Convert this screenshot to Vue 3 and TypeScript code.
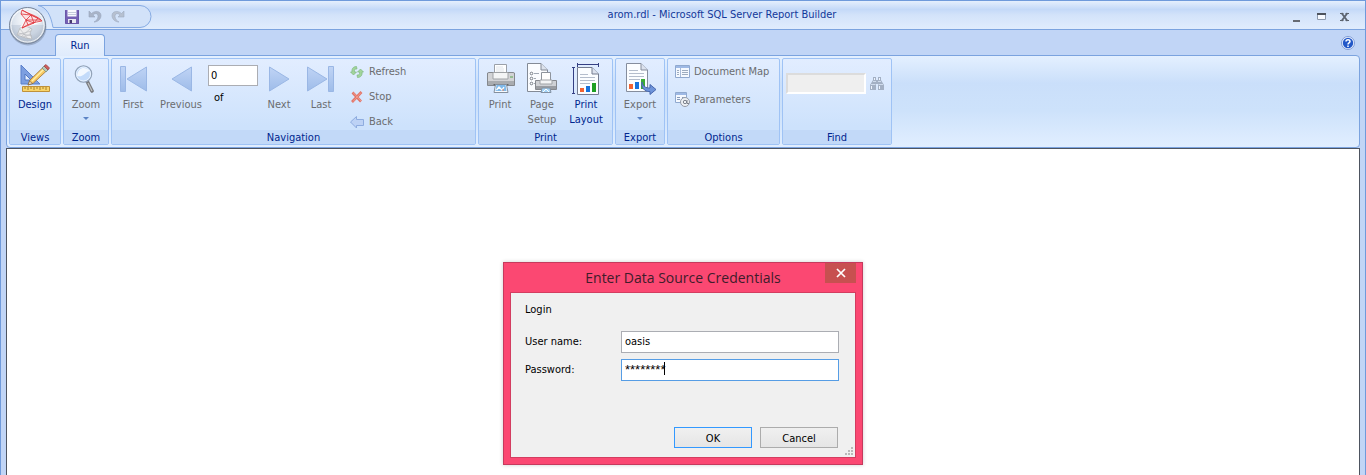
<script setup lang="ts">
import { ref } from 'vue'

const pageNumber = ref('0')
const findText = ref('')
const userName = ref('oasis')
const password = ref('********')
</script>

<template>
  <div class="window">
    <header class="titlebar">
      <div class="quick">
        <svg class="quick-frame" width="158" height="28" viewBox="0 0 158 28" aria-hidden="true">
          <path d="M37 4.500H139a11 11 0 0 1 0 22H52C50 15 46 6 37 4.500Z" fill="#d2e2f9" stroke="#86abe3" />
        </svg>
        <button class="plain" aria-label="Save">
          <svg width="14" height="14" viewBox="0 0 14 14"><path d="M0 0H14V14H1L0 13Z" fill="#7560b5" /><path d="M2.500 0H11.500V6.500H2.500Z" fill="#fafaff" /><path d="M3 2.500H11M3 4.500H11" stroke="#c6cbdc" /><path d="M3 9H11V14H3Z" fill="#e7e8f1" /><path d="M4.500 10H7V14H4.500Z" fill="#46386e" /><path d="M.500 .500V13.500H13.500V.500" fill="none" stroke="#6a56a8" /></svg>
        </button>
        <button class="plain" aria-label="Undo">
          <svg width="14" height="14" viewBox="0 0 14 14"><path d="M1 1V7H7L5 5C7 3 10 3 10 6.500C10 9 8 11 6 12C10 12 13 9 13 5.500C13 1 7 0 3.500 3.500Z" fill="#a9b4c7" stroke="#98a6be" stroke-width=".6" /></svg>
        </button>
        <button class="plain" aria-label="Redo">
          <svg width="14" height="14" viewBox="0 0 14 14"><path d="M13 1V7H7L9 5C7 3 4 3 4 6.500C4 9 6 11 8 12C4 12 1 9 1 5.500C1 1 7 0 10.500 3.500Z" fill="#b6c0d0" stroke="#9dabc1" stroke-width=".6" /></svg>
        </button>
      </div>
      <h1>arom.rdl - Microsoft SQL Server Report Builder</h1>
      <div class="controls">
        <button class="plain" aria-label="Minimize"><svg width="10" height="10" viewBox="0 0 10 10"><path d="M1 8H8V10H1Z" fill="#666b73" /></svg></button>
        <button class="plain" aria-label="Maximize"><svg width="10" height="10" viewBox="0 0 10 10"><path d="M1 1H10V8H1Z" fill="#f7faff" /><path d="M1.500 1V7.500H9.500V1" fill="none" stroke="#8b98ac" /><path d="M1 1H10V3H1Z" fill="#4d535d" /></svg></button>
        <button class="plain" aria-label="Close"><svg width="10" height="10" viewBox="0 0 10 10"><path d="M0 1.500H3.500M5.500 1.500H9M0 8.500H3.500M5.500 8.500H9" stroke="#58606c" /><path d="M1.500 1L7.500 9M7.500 1L1.500 9" stroke="#5c6470" stroke-width="1.800" /></svg></button>
      </div>
    </header>

    <button class="orb plain" aria-label="Application menu">
      <svg width="40" height="40" viewBox="0 0 40 40">
        <defs>
          <radialGradient id="orbFill" cx=".5" cy=".35" r=".62"><stop offset="0" stop-color="#fff" /><stop offset=".65" stop-color="#dce4ee" /><stop offset="1" stop-color="#aeb9c8" /></radialGradient>
        </defs>
        <circle cx="20" cy="21" r="18.500" fill="#6e7f98" opacity=".45" />
        <circle cx="19.500" cy="19.500" r="18" fill="url(#orbFill)" stroke="#77859a" />
        <path d="M2.500 19H36.500A17 17 0 0 1 2.500 19Z" fill="#aebbcd" opacity=".4" />
        <circle cx="19.500" cy="19.500" r="16.500" fill="none" stroke="#fff" opacity=".8" />
        <path d="M12 22L18 20L24 23L22 27L24 33L18 32L9 29Z" fill="#ececed" stroke="#b2b4b8" stroke-width=".7" />
        <path d="M10 27L24 30M12 23L20 33M23 22L13 31M9 29L23 25M15 31L23 28" stroke="#b4b6ba" stroke-width=".6" fill="none" />
        <path d="M13 3L19 5L32 13L34 16L25 19L15 22L12 21L17 15L13 9Z" fill="#fff" opacity=".9" />
        <path d="M14 4L13 8L18 14L14 22C20 18 27 16 34 15C30 10 21 8 14 4Z" fill="#fbe3e4" stroke="#dc3239" stroke-width=".8" />
        <path d="M13 8L23 9L33 14L18 14L23 9L14 4M18 14L26 17L23 9L30 12L26 17L14 22M18 14L20 19" fill="none" stroke="#df343b" stroke-width=".8" />
      </svg>
    </button>

    <nav class="tabs">
      <button class="tab">Run</button>
      <button class="plain help" aria-label="Help">
        <svg width="14" height="14" viewBox="0 0 14 14"><circle cx="7" cy="7" r="6.500" fill="#eef4ff" stroke="#7f9bd4" /><circle cx="7" cy="7" r="5.200" fill="#2358c8" /><path d="M5 5.500C5 3 9 3 9 5.500C9 7 7 6.800 7 8.500M7 9.500V11" fill="none" stroke="#fff" stroke-width="1.500" /></svg>
      </button>
    </nav>

    <section class="ribbon" aria-label="Run">
      <section class="group views">
        <div class="body">
          <button class="big active w50">
            <svg width="32" height="32" viewBox="0 0 32 32"><path d="M2 2V21H21Z" fill="#7d9fe0" stroke="#5b80cb" /><path d="M6 11V17H12Z" fill="#e6effd" stroke="#5379c4" /><path d="M3.500 23.500H30.500V28.500H3.500Z" fill="#f9d468" stroke="#bf913a" /><path d="M6 24V26M9 24V27M12 24V26M15 24V27M18 24V26M21 24V27M24 24V26M27 24V27" stroke="#8f6b27" stroke-width=".8" /><path d="M9 22L11 17L25 3.500L28.500 7L14.500 20Z" fill="#f7c862" stroke="#9b7239" stroke-width=".8" /><path d="M13 18L25 6" stroke="#fff0a8" stroke-width="1.500" /><path d="M9 22L10.500 18L13.500 20.500Z" fill="#f3dfbe" stroke="#70522e" stroke-width=".6" /><path d="M23 5L25 3L29 7L27 9Z" fill="#b6c9b9" stroke="#71887c" stroke-width=".7" /><path d="M25 3L27 1.500L30.500 5L29 7Z" fill="#cf5c5c" stroke="#9a4444" stroke-width=".7" /></svg>
            <span>Design</span>
          </button>
        </div>
        <h2>Views</h2>
      </section>

      <section class="group">
        <div class="body">
          <button class="big w44">
            <svg width="32" height="32" viewBox="0 0 32 32"><path d="M17 18L22 28" stroke="#77797d" stroke-width="3.600" stroke-linecap="round" /><path d="M18 20L22 28" stroke="#bfc1c4" stroke-width="1.200" /><circle cx="13.500" cy="11" r="8.200" fill="#c3dbfa" stroke="#93a3b8" stroke-width="1.200" /><path d="M7 13C8 4 15 3 20 8C16 8 13 15 7 13Z" fill="#f2f8ff" /><circle cx="13.500" cy="11" r="7" fill="none" stroke="#e8f2ff" /></svg>
            <span>Zoom</span><i class="arrow"></i>
          </button>
        </div>
        <h2>Zoom</h2>
      </section>

      <section class="group">
        <svg width="0" height="0" class="defs" aria-hidden="true"><defs><linearGradient id="navFill" x1="0" y1="0" x2="0" y2="1"><stop offset="0" stop-color="#c0d4f5" /><stop offset="1" stop-color="#9ebce9" /></linearGradient></defs></svg>
        <div class="body nav-body">
          <button class="big w42">
            <svg width="32" height="32" viewBox="0 0 32 32"><path d="M3.500 3.500H8.500V28.500H3.500ZM29.500 4V28L10 16Z" fill="url(#navFill)" stroke="#9ab7e5" /></svg>
            <span>First</span>
          </button>
          <button class="big w54">
            <svg width="32" height="32" viewBox="0 0 32 32"><path d="M26.500 4V28L7 16Z" fill="url(#navFill)" stroke="#9ab7e5" /></svg>
            <span>Previous</span>
          </button>
          <div class="pager"><input v-model="pageNumber" aria-label="Page number" /><span>of</span></div>
          <button class="big w42">
            <svg width="32" height="32" viewBox="0 0 32 32"><path d="M6.500 4V28L26 16Z" fill="url(#navFill)" stroke="#9ab7e5" /></svg>
            <span>Next</span>
          </button>
          <button class="big w42">
            <svg width="32" height="32" viewBox="0 0 32 32"><path d="M23.500 3.500H28.500V28.500H23.500ZM2.500 4V28L22 16Z" fill="url(#navFill)" stroke="#9ab7e5" /></svg>
            <span>Last</span>
          </button>
          <div class="stack three">
            <button class="small"><svg width="14" height="14" viewBox="0 0 14 14"><path d="M6.500 1.500C3 1.500 1.500 4 2 7H.500L3.500 10L6.500 7H4.500C4 5 5 3.500 7 4ZM7.500 12.500C11 12.500 12.500 10 12 7H13.500L10.500 4L7.500 7H9.500C10 9 9 10.500 7 10Z" fill="#a2d59b" stroke="#80b982" stroke-width=".7" /></svg>Refresh</button>
            <button class="small"><svg width="14" height="14" viewBox="0 0 14 14"><path d="M2.500 2.500L11 11.500M11.500 2L2 12" stroke="#e17468" stroke-width="2.600" /><path d="M3 2.500L11 11M11 2.500L3 11.500" stroke="#f29a8d" /></svg>Stop</button>
            <button class="small"><svg width="14" height="14" viewBox="0 0 14 14"><path d="M.500 7L6.500 1.500V4.500H13.500V10.500H6.500V13Z" fill="#bdd2f5" stroke="#8eacdf" /></svg>Back</button>
          </div>
        </div>
        <h2>Navigation</h2>
      </section>

      <section class="group">
        <div class="body print-body">
          <button class="big w42">
            <svg width="32" height="32" viewBox="0 0 32 32"><path d="M10.500 11V1.500H22.500V11" fill="#fff" stroke="#9ba0a8" /><path d="M12 4H19M12 6H20M12 8H20" stroke="#e0e4ea" /><path d="M3.500 10L5 9.500H29L30.500 10V22.500H3.500Z" fill="#d2d3d6" stroke="#85888d" /><path d="M9 9.500H24V16H9Z" fill="#f4f5f6" stroke="#a0a3a7" /><path d="M4 18H30V22H4Z" fill="#a9acb0" /><path d="M26 14H29" stroke="#58a64f" /><path d="M9 21H25L23 23H11Z" fill="#63666b" /><path d="M11.500 21.500H22.500L24 29.500H10Z" fill="#f7fbff" stroke="#848f9d" /><path d="M12.500 22H21.500L22.500 28H11.500Z" fill="#7fb9ea" /><path d="M12.500 27L15 24L18 27L20 24" fill="none" stroke="#fff" stroke-width="1.300" /><path d="M18 27H20" stroke="#e17a58" /></svg>
            <span>Print</span>
          </button>
          <button class="big w42">
            <svg width="32" height="32" viewBox="0 0 32 32"><path d="M1.500 .500H15L21.500 7V28.500H1.500Z" fill="#fafcff" stroke="#838a96" /><path d="M15 .500V7H21.500" fill="#dce2ec" stroke="#838a96" /><g fill="#fff" stroke="#59616d" stroke-width=".8"><circle cx="5.500" cy="10.500" r="1.300" /><circle cx="5.500" cy="15.500" r="1.300" /><circle cx="5.500" cy="20.500" r="1.300" /></g><path d="M8 10.500H13M8 15.500H10M8 20.500H9" stroke="#a0a8b4" /><path d="M15.500 17V9.500H24.500V17" fill="#fff" stroke="#8e949d" /><path d="M9.500 17.500H30.500V26.500H9.500Z" fill="#cfd1d5" stroke="#85888e" /><path d="M14 17H26V21H14Z" fill="#f4f5f6" stroke="#a0a3a7" /><path d="M10 23H30V26H10Z" fill="#9a9da2" /><path d="M16 25H24L25 29.500H15Z" fill="#a7d5f7" stroke="#8391a2" /><path d="M17 29L20 26L23 29" fill="none" stroke="#fff" /></svg>
            <span>Page<br />Setup</span>
          </button>
          <button class="big active w46">
            <svg width="32" height="32" viewBox="0 0 32 32"><path d="M7 1.500H29M7.500 0V4M28.500 0V4M3.500 4V31M2 4.500H5M2 30.500H5" stroke="#343f83" fill="none" /><path d="M7.500 4.500H22L28.500 11V31.500H7.500Z" fill="#fbfdff" stroke="#747c90" /><path d="M22 4.500V11H28.500" fill="#dce2ee" stroke="#747c90" /><path d="M10 11.500H18M10 14.500H25M10 17.500H25M10 20.500H20" stroke="#b4bdcc" /><path d="M10 25H14V29H10Z" fill="#f26332" /><path d="M16 23H20V29H16Z" fill="#1672dc" /><path d="M22 20H26V29H22Z" fill="#1d9f22" /></svg>
            <span>Print<br />Layout</span>
          </button>
        </div>
        <h2>Print</h2>
      </section>

      <section class="group">
        <div class="body">
          <button class="big w48">
            <svg width="32" height="32" viewBox="0 0 32 32"><path d="M2.500 .500H17L23.500 7V28.500H2.500Z" fill="#fbfdff" stroke="#858d9d" /><path d="M17 .500V7H23.500" fill="#dce2ee" stroke="#858d9d" /><path d="M5 7.500H14M5 10.500H20M5 13.500H20M5 16.500H16" stroke="#b4bdcc" /><path d="M5 21H9V26H5Z" fill="#f26332" /><path d="M11 19H15V26H11Z" fill="#1672dc" /><path d="M17 16H21V26H17Z" fill="#39ab36" /><path d="M18 19C19 24 22 25 26 25V21.500L32 26.500L26 31.500V28.500C20 29 17 24 18 19Z" fill="#6e94da" stroke="#4767ae" /></svg>
            <span>Export</span><i class="arrow"></i>
          </button>
        </div>
        <h2>Export</h2>
      </section>

      <section class="group">
        <div class="body options-body">
          <div class="stack two">
            <button class="small"><svg width="15" height="15" viewBox="0 0 15 15"><path d="M.500 1.500H14.500V13.500H.500Z" fill="#f5f9ff" stroke="#90a9cf" /><path d="M1 2H14V4H1Z" fill="#9eb9e5" /><path d="M5.500 4V13" stroke="#a9bbd8" /><path d="M2 6.500H4M2 8.500H4M2 10.500H4M7 6.500H13M7 8.500H13M7 10.500H13" stroke="#9eacbf" /></svg>Document Map</button>
            <button class="small"><svg width="15" height="15" viewBox="0 0 15 15"><path d="M.500 .500H11.500V10.500H.500Z" fill="#f5f9ff" stroke="#90a9cf" /><path d="M1 1H11V3H1Z" fill="#9eb9e5" /><path d="M2 5.500H5M2 7.500H5M7 5.500H10" stroke="#879bbb" /><circle cx="10" cy="10" r="4.500" fill="#eef1f5" stroke="#949ba6" /><circle cx="10" cy="10" r="1.700" fill="none" stroke="#7d838c" /><path d="M12 8V11.500H14" fill="none" stroke="#7d838c" /></svg>Parameters</button>
          </div>
        </div>
        <h2>Options</h2>
      </section>

      <section class="group">
        <div class="body find-body">
          <input v-model="findText" aria-label="Find text" disabled />
          <button class="plain" aria-label="Find"><svg width="16" height="15" viewBox="0 0 16 15"><path d="M4 1H7V4H9V1H12V4L15 9V14H9V8H7V14H1V9L4 4Z" fill="#a3b0c4" /><path d="M2 10H3V13H2ZM10 10H11V13H10ZM5 2H6V4H5ZM10 2H11V4H10Z" fill="#eef4fd" /><path d="M2 8.500H6.500M9.500 8.500H14M4 5.500H7M9 5.500H12" stroke="#cfdbec" /></svg></button>
        </div>
        <h2>Find</h2>
      </section>
    </section>

    <main class="canvas"></main>

    <form class="dialog" role="dialog" aria-labelledby="dialog-title" @submit.prevent>
      <h2 id="dialog-title">Enter Data Source Credentials</h2>
      <button class="dialog-close" type="button" aria-label="Close dialog"><svg width="10" height="10" viewBox="0 0 10 10"><path d="M1 1L9 9M9 1L1 9" stroke="#fff" stroke-width="1.700" /></svg></button>
      <div class="client">
        <p>Login</p>
        <div class="row"><label for="user">User name:</label><input id="user" v-model="userName" /></div>
        <div class="row"><label for="pass">Password:</label><div class="secret"><input id="pass" v-model="password" autocomplete="off" /><i class="caret"></i></div></div>
        <div class="actions"><button class="ok" type="submit">OK</button><button type="button">Cancel</button></div>
        <svg class="grip" width="8" height="8" viewBox="0 0 8 8" aria-hidden="true"><path d="M6 0H8V2H6ZM3 3H5V5H3ZM6 3H8V5H6ZM0 6H2V8H0ZM3 6H5V8H3ZM6 6H8V8H6Z" fill="#b9b9b9" /></svg>
      </div>
    </form>
  </div>
</template>

<style>
body { background: #bfd4f5; }
</style>

<style scoped>
* { box-sizing: border-box; }
.window { position: relative; display: flex; flex-direction: column; min-height: 100vh; overflow: hidden; border: 1px solid #6f9adb; border-bottom: 0; background: #c1d5f6; color: #6b6d70; font: 11px/15px "DejaVu Sans Condensed", "Noto Sans", sans-serif; }
button, input { font: inherit; }
button { padding: 0; color: inherit; }
svg { display: block; flex: none; }
h1, h2, p { margin: 0; font: inherit; }
.plain { display: flex; align-items: center; justify-content: center; border: 0; background: none; }
.titlebar { display: flex; height: 29px; border-bottom: 1px solid #7ba3df; background: linear-gradient(#e5effd, #c4d9f8 30%, #d3e3fa 50%, #e0ecfd); }
.titlebar h1 { flex: 1; color: #12389a; line-height: 28px; text-align: center; }
.quick { position: relative; display: flex; gap: 9px; width: 158px; padding-left: 64px; }
.quick-frame { position: absolute; top: 0; left: 0; }
.quick .plain { position: relative; width: 14px; height: 32px; }
.controls { display: flex; margin-right: 8px; }
.controls .plain { width: 24px; height: 32px; }
.orb { position: absolute; top: 5px; left: 7px; z-index: 1; }
.tabs { display: flex; align-items: flex-end; justify-content: space-between; height: 25px; padding: 0 10px 0 54px; }
.tab { position: relative; width: 50px; height: 22px; margin-bottom: -1px; border: 1px solid #7ba3df; border-bottom: 0; border-radius: 4px 4px 0 0; background: linear-gradient(#edf4fe, #dfebfc); color: #00268f; }
.help { height: 24px; }
.ribbon { display: flex; gap: 2px; margin: 0 5px; padding: 2px; border: 1px solid #7ba3df; border-radius: 4px; background: linear-gradient(#e4f0ff, #cadffa 30%, #cde2fb 60%, #e1eeff); }
.group { display: flex; flex-direction: column; border: 1px solid #9fc3f5; border-radius: 2px; background: linear-gradient(#e2edff, #cde2fc 80%); }
.group h2 { height: 14px; background: #c2d9f8; color: #00268f; line-height: 16px; text-align: center; }
.defs { position: absolute; }
.body { display: flex; height: 71px; }
.big { display: flex; flex-direction: column; align-items: center; padding-top: 4px; border: 0; background: none; }
.big svg { margin-bottom: 2px; }
.active { color: #00268f; }
.w42 { width: 42px; } .w44 { width: 44px; } .w46 { width: 46px; } .w48 { width: 48px; } .w50 { width: 50px; } .w54 { width: 54px; }
.arrow { margin-top: 5px; border: 3px solid transparent; border-top-color: #5b83c5; border-bottom: 0; }
.nav-body { width: 363px; }
.print-body { width: 133px; }
.options-body { width: 111px; }
.pager { display: flex; flex-direction: column; width: 50px; padding-top: 6px; color: #000; }
.pager input { width: 50px; height: 21px; padding: 0 2px; border: 1px solid #abadb3; background: #fff; }
.pager span { margin: 4px 6px; }
.stack { display: flex; flex-direction: column; }
.three { margin-left: 8px; }
.two { gap: 4px; margin-left: 7px; }
.small { display: flex; flex: none; align-items: center; gap: 5px; height: 25px; border: 0; background: none; }
.two .small { gap: 4px; height: 24px; }
.find-body { gap: 3px; width: 108px; padding: 14px 3px; }
.find-body input { width: 80px; height: 21px; border: 2px solid #dcdcdc; border-right-color: #fff; border-bottom-color: #fff; background: #efefef; }
.find-body .plain { height: 21px; }
.canvas { flex: 1; margin: 0 5px; border: 1px solid #4d5460; border-bottom: 0; background: #fff; }
.dialog { position: absolute; top: 261px; left: 50%; width: 360px; margin-left: -180px; padding: 0 6px 6px; border: 1px solid #c63a5d; background: #fb4872; box-shadow: 0 0 4px #0003; color: #000; }
.dialog h2 { height: 29px; color: #401c2b; font: 14px/30px "Open Sans", "Noto Sans", sans-serif; text-align: center; }
.dialog-close { position: absolute; top: 0; right: 6px; display: flex; align-items: center; justify-content: center; width: 31px; height: 20px; border: 0; background: #c75050; }
.client { position: relative; padding: 8px 16px 9px 14px; border: 1px solid #d33d60; background: #f0f0f0; }
.client p { height: 30px; line-height: 17px; }
.row { display: flex; height: 28px; }
.row label { flex: 0 0 96px; line-height: 22px; }
.row input { flex: 1; width: 100%; min-width: 0; height: 22px; padding: 0 3px 1px; border: 1px solid #abadb3; background: #fff; color: #000; outline: 0; }
.secret { position: relative; flex: 1; }
.row .secret input { border-color: #569de5; font: 13px "Liberation Sans", sans-serif; }
.caret { position: absolute; top: 3px; left: 43px; width: 1px; height: 13px; background: #000; }
.actions { display: flex; justify-content: flex-end; gap: 8px; margin: 40px 1px 0 0; }
.actions button { width: 78px; height: 21px; padding-top: 1px; border: 1px solid #acacac; background: linear-gradient(#f0f0f0, #e5e5e5); color: #000; }
.actions .ok { border-color: #3399ff; }
.grip { position: absolute; right: 2px; bottom: 2px; }
</style>
